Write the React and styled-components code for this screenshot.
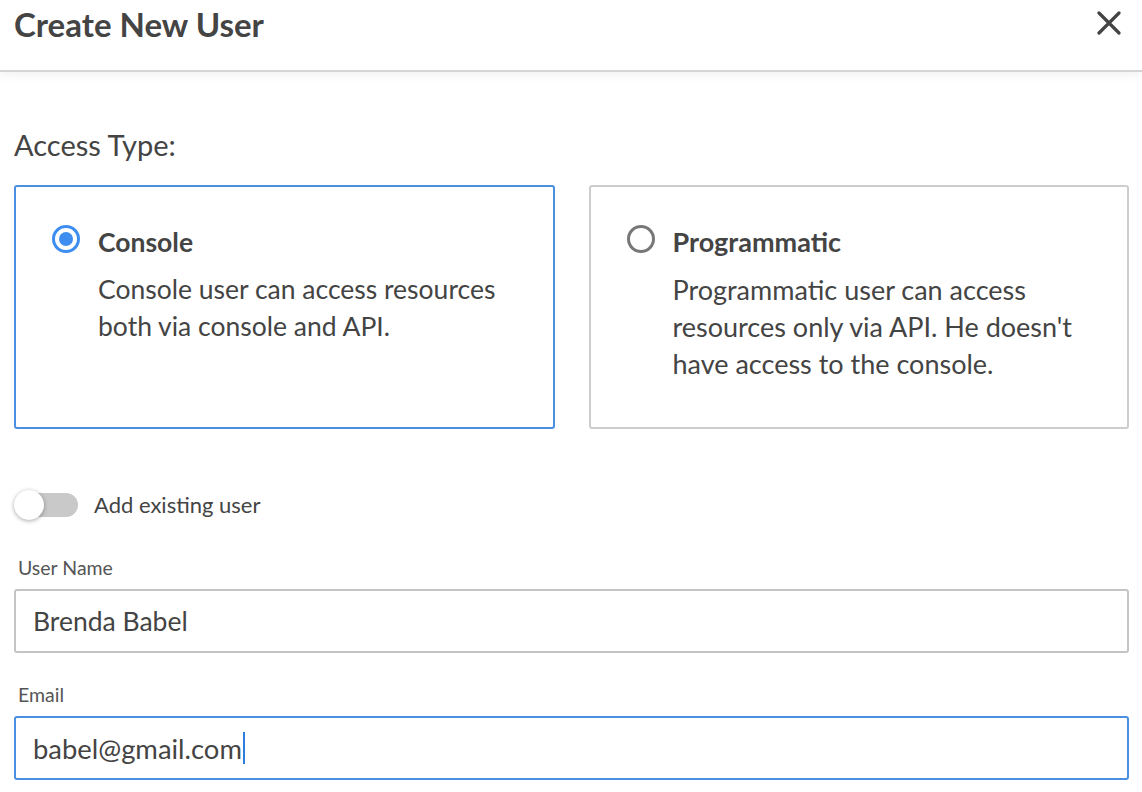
import styled, { createGlobalStyle } from "styled-components"

const GlobalStyle = createGlobalStyle`
    body {
        margin: 0;
        background: #fff;
        font-family: Lato, "Noto Sans", sans-serif;
        color: #444;
    }
`
const Container = styled.div`
    width: 1142px;
    height: 792px;
    overflow: hidden;
    background: #fff;
`
const Header = styled.div`
    height: 70px;
    display: flex;
    align-items: flex-start;
    justify-content: space-between;
    padding: 0 20px 0 14px;
    border-bottom: 2px solid #d4d4d4;
    box-shadow: 0 3px 10px rgba(0, 0, 0, 0.06);
    position: relative;
`
const Title = styled.h1`
    margin: 4px 0 0;
    font-size: 33px;
    font-weight: 700;
    color: #444;
    line-height: 40px;
`
const Close = styled.button`
    border: none;
    background: none;
    padding: 0;
    margin-top: 10px;
    width: 26px;
    height: 26px;
    display: flex;
    align-items: center;
    justify-content: center;
    cursor: pointer;
`
const Body = styled.div`
    padding: 55px 13px 0 14px;
`
const SectionTitle = styled.div`
    font-size: 29px;
    line-height: 36px;
    color: #444;
    margin-bottom: 22px;
`
const Cards = styled.div`
    display: grid;
    grid-template-columns: 1fr 1fr;
    gap: 34px;
`
const Card = styled.div`
    height: 244px;
    box-sizing: border-box;
    border: 2px solid ${(p) => (p.$active ? "#4a90e2" : "#cdcdcd")};
    border-radius: 3px;
    padding: 37px 20px 0 36px;
    display: flex;
    gap: 18px;
`
const Radio = styled.span`
    flex: none;
    width: 28px;
    height: 28px;
    box-sizing: border-box;
    border-radius: 50%;
    border: 3px solid ${(p) => (p.$checked ? "#3d8ef0" : "#777")};
    display: flex;
    align-items: center;
    justify-content: center;
    margin-top: 1px;
    &::after {
        content: "";
        width: 14px;
        height: 14px;
        border-radius: 50%;
        background: ${(p) => (p.$checked ? "#3d8ef0" : "transparent")};
    }
`
const CardText = styled.div`
    display: flex;
    flex-direction: column;
`
const CardTitle = styled.div`
    font-size: ${(p) => p.$size || 26.5}px;
    font-weight: 700;
    line-height: 36px;
    margin-bottom: 11px;
`
const CardDesc = styled.div`
    font-size: ${(p) => p.$size || 26.5}px;
    line-height: 37px;
    white-space: nowrap;
`
const ToggleRow = styled.label`
    display: flex;
    align-items: center;
    gap: 16px;
    margin-top: 62px;
    font-size: 22px;
`
const Track = styled.span`
    position: relative;
    width: 63px;
    height: 24px;
    margin-left: 1px;
    border-radius: 12px;
    background: #c9c9c9;
`
const Knob = styled.span`
    position: absolute;
    left: -1px;
    top: -3px;
    width: 30px;
    height: 30px;
    border-radius: 50%;
    background: #fff;
    box-shadow: 0 1px 4px rgba(0, 0, 0, 0.35);
`
const Field = styled.div`
    margin-top: ${(p) => p.$top}px;
`
const Label = styled.div`
    font-size: 19.5px;
    line-height: 24px;
    color: #555;
    padding-left: 4px;
    margin-bottom: 9px;
`
const Input = styled.div`
    height: 64px;
    box-sizing: border-box;
    border: 2px solid ${(p) => (p.$focus ? "#4a90e2" : "#c4c4c4")};
    border-radius: 3px;
    padding: 0 17px;
    display: flex;
    align-items: center;
    font-size: ${(p) => p.$size}px;
    color: #444;
`
const Caret = styled.span`
    display: inline-block;
    width: 2px;
    height: 32px;
    background: #2f7de1;
    margin-left: 1px;
`

const App = () => {
    return (
        <Container>
            <GlobalStyle />
            <Header>
                <Title>Create New User</Title>
                <Close>
                    <svg width="24" height="24" viewBox="0 0 24 24">
                        <path d="M2 2L22 22M22 2L2 22" stroke="#444" strokeWidth="3.2" strokeLinecap="round" />
                    </svg>
                </Close>
            </Header>
            <Body>
                <SectionTitle>Access Type:</SectionTitle>
                <Cards>
                    <Card $active>
                        <Radio $checked />
                        <CardText>
                            <CardTitle>Console</CardTitle>
                            <CardDesc>
                                Console user can access resources
                                <br />
                                both via console and API.
                            </CardDesc>
                        </CardText>
                    </Card>
                    <Card>
                        <Radio />
                        <CardText>
                            <CardTitle $size={27}>Programmatic</CardTitle>
                            <CardDesc $size={27}>
                                Programmatic user can access
                                <br />
                                resources only via API. He doesn't
                                <br />
                                have access to the console.
                            </CardDesc>
                        </CardText>
                    </Card>
                </Cards>
                <ToggleRow>
                    <Track>
                        <Knob />
                    </Track>
                    Add existing user
                </ToggleRow>
                <Field $top={38}>
                    <Label>User Name</Label>
                    <Input $size={26.5}>Brenda Babel</Input>
                </Field>
                <Field $top={30}>
                    <Label>Email</Label>
                    <Input $focus $size={27.4}>
                        babel@gmail.com
                        <Caret />
                    </Input>
                </Field>
            </Body>
        </Container>
    )
}

export default App
